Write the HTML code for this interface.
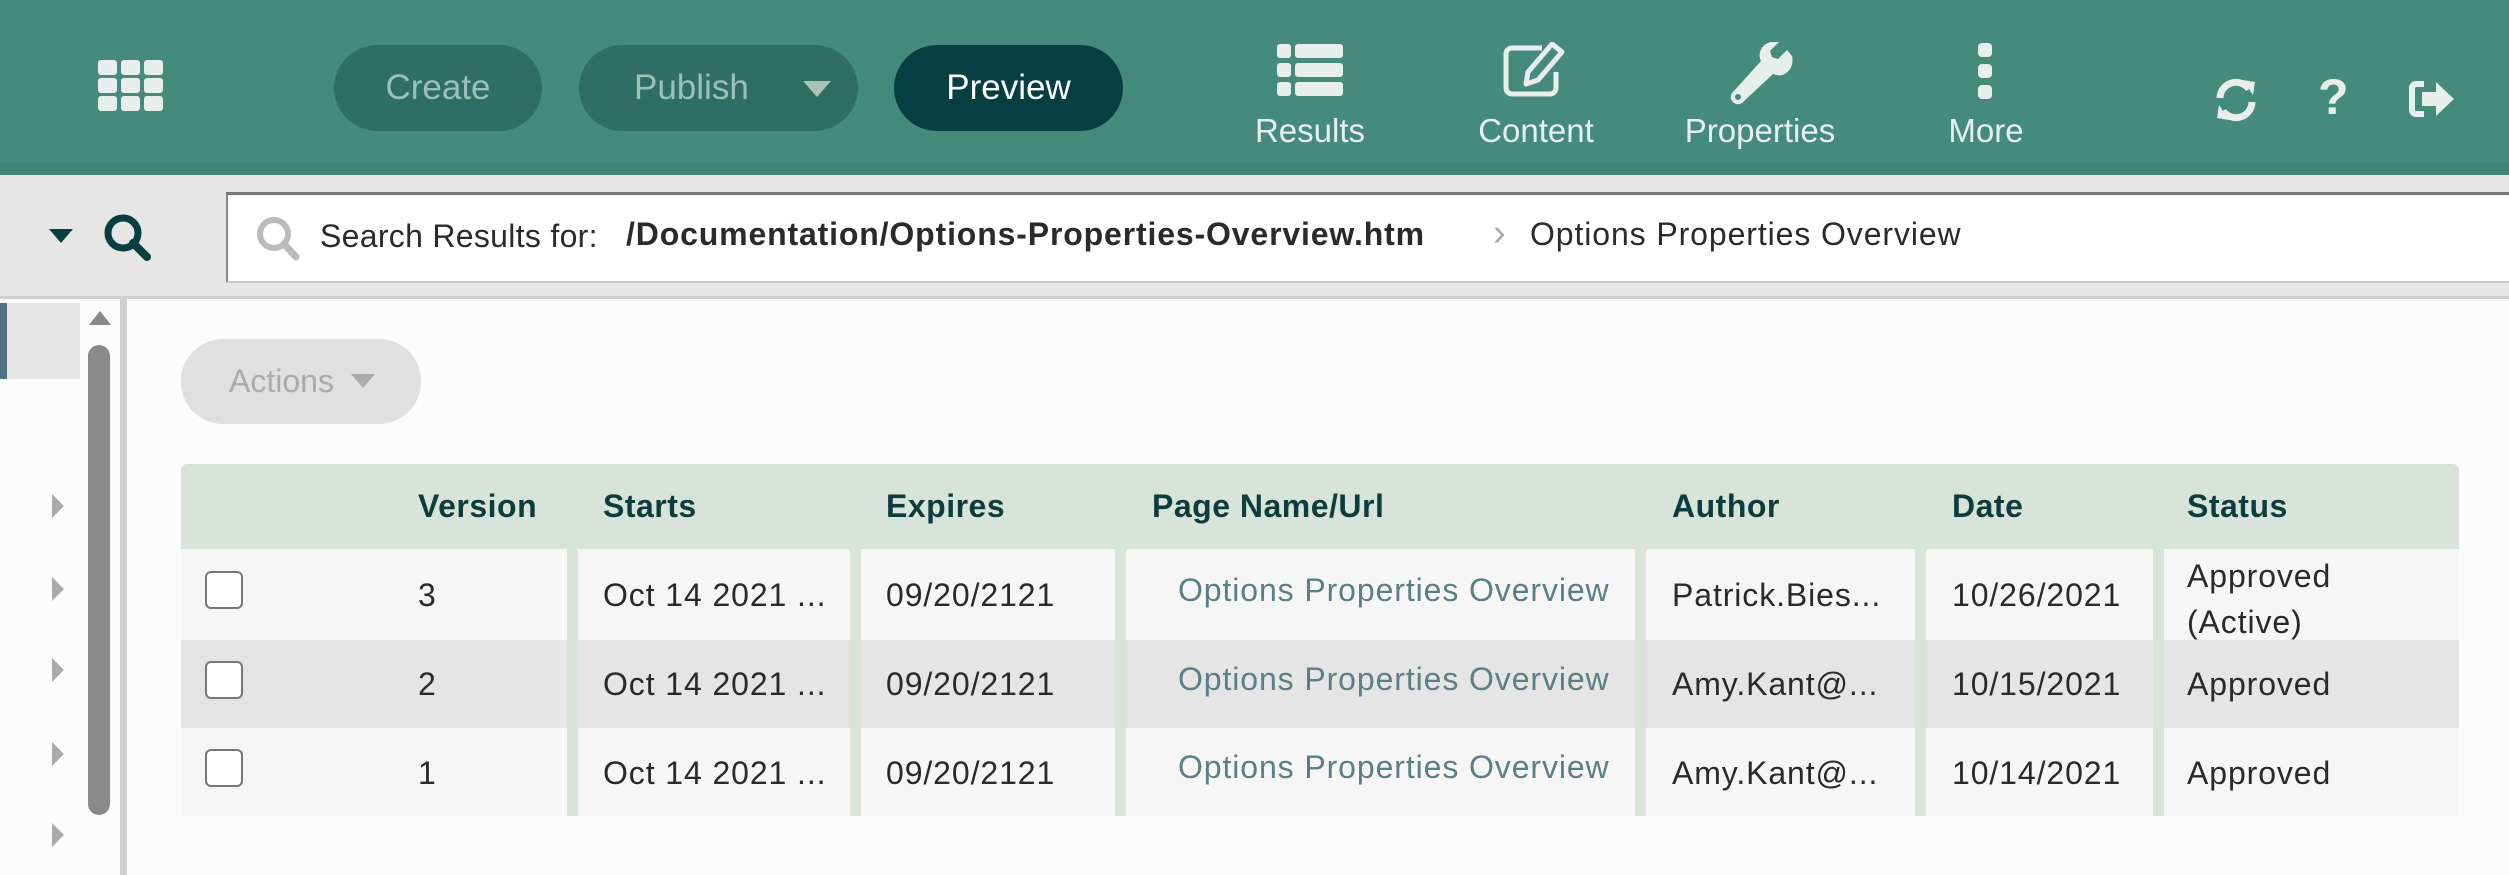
<!DOCTYPE html>
<html><head><meta charset="utf-8"><style>
*{margin:0;padding:0;box-sizing:border-box}
body{width:2509px;height:875px;overflow:hidden;background:#fcfcfd;font-family:"Liberation Sans",sans-serif;position:relative}
.a{position:absolute}
.hdr{left:0;top:0;width:2509px;height:175px;background:#458b7c;border-bottom:12px solid #3f8474}
.btn{top:45px;height:86px;border-radius:43px;background:#2f6e64;color:#9cbfb6;font-size:35px;line-height:86px;text-align:center}
.nav{color:#e8efec;font-size:33px;text-align:center;width:200px;top:112px}
.t{font-size:32px;color:#2a2a2a;white-space:nowrap;letter-spacing:0.9px}
.th{font-size:32px;font-weight:bold;color:#0c3c3c;top:488px;letter-spacing:0.5px}
.sep{background:#d8e3da;top:549px;height:267px;width:11px}
.cb{left:205px;width:38px;height:38px;border:2px solid #777;border-radius:6px;background:#fff}
.lk{color:#5a7f86}
.chev{left:52px;width:0;height:0;border-top:12px solid transparent;border-bottom:12px solid transparent;border-left:12px solid #aaa}
</style></head><body>
<div class="a hdr"></div>
<svg class="a" style="left:98px;top:60px" width="66" height="52" viewBox="0 0 66 52"><g fill="#e8eeec">
<rect x="0" y="0" width="19" height="15" rx="3"/><rect x="23" y="0" width="19" height="15" rx="3"/><rect x="46" y="0" width="19" height="15" rx="3"/>
<rect x="0" y="18" width="19" height="15" rx="3"/><rect x="23" y="18" width="19" height="15" rx="3"/><rect x="46" y="18" width="19" height="15" rx="3"/>
<rect x="0" y="36" width="19" height="15" rx="3"/><rect x="23" y="36" width="19" height="15" rx="3"/><rect x="46" y="36" width="19" height="15" rx="3"/></g></svg>
<div class="a btn" style="left:334px;width:208px">Create</div>
<div class="a btn" style="left:579px;width:279px;text-align:left;padding-left:55px">Publish</div>
<div class="a" style="left:803px;top:81px;border-left:14px solid transparent;border-right:14px solid transparent;border-top:16px solid #a9c3bc"></div>
<div class="a btn" style="left:894px;width:229px;background:#053f42;color:#fff">Preview</div>
<svg class="a" style="left:1277px;top:44px" width="66" height="52" viewBox="0 0 66 52"><g fill="#e8eeec">
<rect x="0" y="0" width="14" height="14" rx="3"/><rect x="18" y="0" width="48" height="14" rx="3"/>
<rect x="0" y="19" width="14" height="14" rx="3"/><rect x="18" y="19" width="48" height="14" rx="3"/>
<rect x="0" y="38" width="14" height="14" rx="3"/><rect x="18" y="38" width="48" height="14" rx="3"/></g></svg>
<svg class="a" style="left:1502px;top:42px" width="66" height="56" viewBox="0 0 66 56"><path d="M40 6H10a6 6 0 0 0-6 6v34a6 6 0 0 0 6 6h38a6 6 0 0 0 6-6V30" fill="none" stroke="#e8eeec" stroke-width="5"/><path d="M50 2l10 8-24 28-12 4 2-12z" fill="none" stroke="#e8eeec" stroke-width="5" stroke-linejoin="round"/></svg>
<svg class="a" style="left:1727px;top:42px" width="66" height="66" viewBox="0 0 66 66"><path d="M60 8l-9 9-6-2-2-6 9-9c-8-2-17 2-19 10-1 4 0 7 1 9L6 50c-3 3-3 7 0 10s7 3 10 0l30-28c3 1 6 2 9 1 8-2 12-11 10-19z" fill="#e8eeec"/><circle cx="11" cy="55" r="3" fill="#458b7c"/></svg>
<svg class="a" style="left:1975px;top:43px" width="22" height="56" viewBox="0 0 22 56"><g fill="#e8eeec"><rect x="3" y="0" width="14" height="14" rx="4"/><rect x="3" y="21" width="14" height="14" rx="4"/><rect x="3" y="42" width="14" height="14" rx="4"/></g></svg>
<div class="a nav" style="left:1210px">Results</div>
<div class="a nav" style="left:1436px">Content</div>
<div class="a nav" style="left:1660px">Properties</div>
<div class="a nav" style="left:1886px">More</div>
<svg class="a" style="left:2213px;top:78px" width="46" height="44" viewBox="0 0 46 44"><path d="M7 20A16 16 0 0 1 36 11" fill="none" stroke="#e8eeec" stroke-width="7"/><path d="M30 2l12 2-2 13z" fill="#e8eeec"/><path d="M39 24A16 16 0 0 1 10 33" fill="none" stroke="#e8eeec" stroke-width="7"/><path d="M16 42l-12-2 2-13z" fill="#e8eeec"/></svg>
<div class="a" style="left:2318px;top:68px;font-size:50px;font-weight:bold;color:#e8eeec">?</div>
<svg class="a" style="left:2408px;top:80px" width="48" height="38" viewBox="0 0 48 38"><path d="M16 4H8a4 4 0 0 0-4 4v22a4 4 0 0 0 4 4h8" fill="none" stroke="#e8eeec" stroke-width="6"/><path d="M14 12h14V2l18 17-18 17V26H14z" fill="#e8eeec"/></svg>
<div class="a" style="left:0;top:175px;width:2509px;height:124px;background:#e6e6e6;border-bottom:3px solid #cfcfcf"></div>
<div class="a" style="left:49px;top:229px;border-left:12px solid transparent;border-right:12px solid transparent;border-top:14px solid #053f42"></div>
<svg class="a" style="left:102px;top:212px" width="52" height="52" viewBox="0 0 52 52"><circle cx="21" cy="21" r="15" fill="none" stroke="#053f42" stroke-width="7"/><path d="M31 31l14 14" stroke="#053f42" stroke-width="8" stroke-linecap="round"/></svg>
<div class="a" style="left:226px;top:192px;width:2290px;height:91px;background:#fff;border-top:3px solid #777;border-left:2px solid #888;border-bottom:2px solid #ccc"></div>
<svg class="a" style="left:254px;top:214px" width="50" height="50" viewBox="0 0 50 50"><circle cx="20" cy="20" r="14" fill="none" stroke="#bbb" stroke-width="6"/><path d="M30 30l12 13" stroke="#bbb" stroke-width="7" stroke-linecap="round"/></svg>
<div class="a t" style="left:320px;top:218px;letter-spacing:0.3px">Search Results for:</div>
<div class="a t" style="left:626px;top:216px;font-weight:bold;letter-spacing:0.85px">/Documentation/Options-Properties-Overview.htm</div>
<div class="a t" style="left:1493px;top:212px;color:#aaa;font-size:38px">›</div>
<div class="a t" style="left:1530px;top:216px">Options Properties Overview</div>
<div class="a" style="left:120px;top:299px;width:7px;height:576px;background:#cfcfcf"></div>
<div class="a" style="left:0;top:303px;width:80px;height:76px;background:#e4e4e4;border-left:7px solid #4f7280"></div>
<div class="a" style="left:89px;top:311px;border-left:11px solid transparent;border-right:11px solid transparent;border-bottom:14px solid #888"></div>
<div class="a" style="left:88px;top:345px;width:22px;height:470px;background:#8a8a8a;border-radius:11px"></div>
<div class="a chev" style="top:494px"></div><div class="a chev" style="top:577px"></div><div class="a chev" style="top:658px"></div><div class="a chev" style="top:742px"></div><div class="a chev" style="top:823px"></div>
<div class="a" style="left:181px;top:339px;width:240px;height:85px;border-radius:42px;background:#e0e0e0;color:#aaa;font-size:32px;line-height:85px;padding-left:48px">Actions</div>
<div class="a" style="left:351px;top:374px;border-left:12px solid transparent;border-right:12px solid transparent;border-top:14px solid #aaa"></div>
<div class="a" style="left:181px;top:464px;width:2278px;height:85px;background:#d8e3da;border-radius:6px 6px 0 0"></div>
<div class="a" style="left:181px;top:549px;width:2278px;height:91px;background:#f6f6f6"></div>
<div class="a" style="left:181px;top:640px;width:2278px;height:88px;background:#e5e5e5"></div>
<div class="a" style="left:181px;top:728px;width:2278px;height:88px;background:#f6f6f6"></div>
<div class="a sep" style="left:567px"></div><div class="a sep" style="left:850px"></div><div class="a sep" style="left:1115px"></div><div class="a sep" style="left:1635px"></div><div class="a sep" style="left:1915px"></div><div class="a sep" style="left:2153px"></div>
<div class="a th" style="left:418px">Version</div><div class="a th" style="left:603px">Starts</div><div class="a th" style="left:886px">Expires</div><div class="a th" style="left:1152px">Page Name/Url</div><div class="a th" style="left:1672px">Author</div><div class="a th" style="left:1952px">Date</div><div class="a th" style="left:2187px">Status</div>
<div class="a cb" style="top:571px"></div><div class="a cb" style="top:661px"></div><div class="a cb" style="top:749px"></div>
<div class="a t" style="left:418px;top:577px">3</div><div class="a t" style="left:603px;top:577px">Oct 14 2021 ...</div><div class="a t" style="left:886px;top:577px">09/20/2121</div><div class="a t lk" style="left:1178px;top:572px">Options Properties Overview</div><div class="a t" style="left:1672px;top:577px">Patrick.Bies...</div><div class="a t" style="left:1952px;top:577px">10/26/2021</div><div class="a t" style="left:2187px;top:553px;line-height:46px">Approved<br>(Active)</div>
<div class="a t" style="left:418px;top:666px">2</div><div class="a t" style="left:603px;top:666px">Oct 14 2021 ...</div><div class="a t" style="left:886px;top:666px">09/20/2121</div><div class="a t lk" style="left:1178px;top:661px">Options Properties Overview</div><div class="a t" style="left:1672px;top:666px">Amy.Kant@...</div><div class="a t" style="left:1952px;top:666px">10/15/2021</div><div class="a t" style="left:2187px;top:666px">Approved</div>
<div class="a t" style="left:418px;top:755px">1</div><div class="a t" style="left:603px;top:755px">Oct 14 2021 ...</div><div class="a t" style="left:886px;top:755px">09/20/2121</div><div class="a t lk" style="left:1178px;top:749px">Options Properties Overview</div><div class="a t" style="left:1672px;top:755px">Amy.Kant@...</div><div class="a t" style="left:1952px;top:755px">10/14/2021</div><div class="a t" style="left:2187px;top:755px">Approved</div>
</body></html>
